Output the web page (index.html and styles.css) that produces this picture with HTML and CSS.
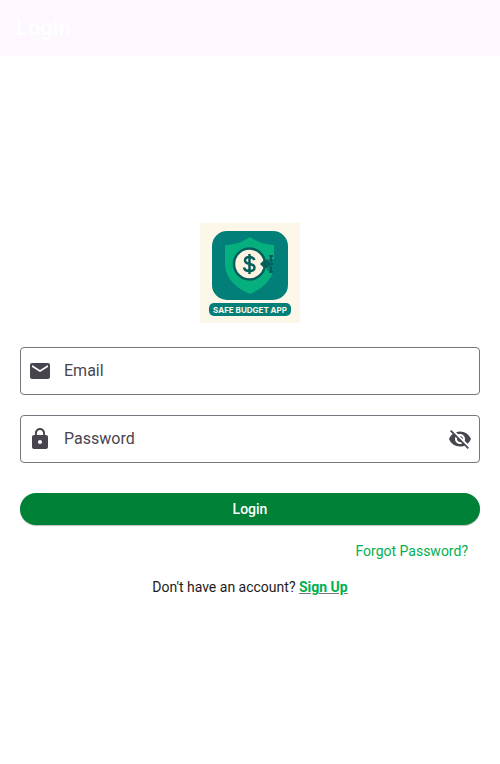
FILE: index.html
```html
<!DOCTYPE html>
<html lang="en">
<head>
<meta charset="utf-8">
<meta name="viewport" content="width=device-width, initial-scale=1">
<title>Login</title>
<link rel="stylesheet" href="styles.css">
</head>
<body>
<header class="app-bar"><h1 class="app-title">Login</h1></header>
<main class="content">
  <svg class="logo" viewBox="0 0 100 100" role="img" aria-label="Safe Budget App">
    <rect width="100" height="100" fill="#fcf7e8"/>
    <rect x="12" y="8" width="76" height="69" rx="15" fill="#027f79"/>
    <path d="M50 14c7 5 15 8 24 8v19c0 14-10 24-24 30-14-6-25-16-25-30V22c9 0 18-3 25-8z" fill="#06b07e"/>
    <path d="M67 36h7v12h-7z" fill="#027f79"/>
    <path d="M71 32v7M71 43v7M69 33h4M69 49h4M66 41h7" fill="none" stroke="#045f5c" stroke-width="2"/>
    <circle cx="49.500" cy="41" r="15.500" fill="#fcf2e1" stroke="#045f5c" stroke-width="2.500"/>
    <path d="M60 41l4-4h3l3 3v2l-3 3h-3z" fill="#045f5c"/>
    <path d="M54.500 37c-1-2-3-3-5-3-3 0-4.500 1.500-4.500 3.500 0 5 9.500 2 9.500 7 0 2.500-2 3.500-5 3.500s-5-1-5.500-3.500M49.500 31v20" fill="none" stroke="#045f5c" stroke-width="2.500"/>
    <rect x="9" y="80" width="82" height="13" rx="5" fill="#027f79"/>
    <text class="logo-text" x="50" y="90" text-anchor="middle">SAFE BUDGET APP</text>
  </svg>
  <form class="form">
    <div class="field">
      <svg class="icon" viewBox="0 0 24 24" aria-hidden="true"><path d="M20 4H4c-1.100 0-1.990.9-1.990 2L2 18c0 1.100.9 2 2 2h16c1.100 0 2-.9 2-2V6c0-1.100-.9-2-2-2zm0 4l-8 5-8-5V6l8 5 8-5v2z"/></svg>
      <label class="label" for="email">Email</label>
      <input class="input" id="email" type="email">
    </div>
    <div class="field">
      <svg class="icon" viewBox="0 0 24 24" aria-hidden="true"><path d="M18 8h-1V6c0-2.760-2.240-5-5-5S7 3.240 7 6v2H6c-1.100 0-2 .9-2 2v10c0 1.100.9 2 2 2h12c1.100 0 2-.9 2-2V10c0-1.100-.9-2-2-2zm-6 9c-1.100 0-2-.9-2-2s.9-2 2-2 2 .9 2 2-.9 2-2 2zm3.100-9H8.900V6c0-1.710 1.390-3.100 3.100-3.100s3.100 1.390 3.100 3.100v2z"/></svg>
      <label class="label" for="password">Password</label>
      <input class="input" id="password" type="password">
      <button class="toggle" type="button" aria-label="Show password">
        <svg class="icon" viewBox="0 0 24 24" aria-hidden="true"><path d="M12 7c2.760 0 5 2.240 5 5 0 .65-.13 1.260-.36 1.830l2.920 2.920c1.510-1.260 2.700-2.890 3.430-4.750-1.730-4.390-6-7.500-11-7.500-1.400 0-2.740.25-3.980.7l2.160 2.160C10.740 7.130 11.350 7 12 7zM2 4.270l2.280 2.280.46.46C3.080 8.300 1.780 10.020 1 12c1.730 4.390 6 7.500 11 7.500 1.550 0 3.030-.3 4.380-.84l.42.42L19.730 22 21 20.730 3.270 3 2 4.270zM7.530 9.800l1.550 1.550c-.05.21-.08.43-.08.65 0 1.660 1.340 3 3 3 .22 0 .44-.03.65-.08l1.550 1.550c-.67.33-1.410.53-2.200.53-2.760 0-5-2.240-5-5 0-.79.2-1.530.53-2.200zm4.310-.78l3.150 3.150.02-.16c0-1.660-1.340-3-3-3l-.17.01z"/></svg>
      </button>
    </div>
    <button class="submit" type="submit">Login</button>
    <a class="forgot" href="#forgot">Forgot Password?</a>
  </form>
  <p class="signup">Don't have an account? <a class="signup-link" href="#signup">Sign Up</a></p>
</main>
</body>
</html>
```
FILE: styles.css
```css
* {
  box-sizing: border-box;
}

body {
  margin: 0;
  min-height: 100vh;
  display: flex;
  flex-direction: column;
  background: #fff;
  color: #1d1b20;
  font: 14px/20px Roboto, sans-serif;
}

.app-bar {
  height: 56px;
  padding: 0 16px;
  display: flex;
  align-items: center;
  background: #fef7ff;
}

.app-title {
  margin: 0;
  color: #fff;
  font-size: 22px;
  line-height: 28px;
  font-weight: 500;
}

.content {
  flex: 1;
  padding: 20px;
  display: flex;
  flex-direction: column;
  align-items: center;
  justify-content: center;
}

.logo {
  width: 100px;
  height: 100px;
  margin-bottom: 24px;
}

.logo-text {
  fill: #fcf7e8;
  font: 700 8px Inter, Roboto, sans-serif;
}

.form {
  width: 100%;
  display: flex;
  flex-direction: column;
}

.field {
  height: 48px;
  margin-bottom: 20px;
  padding: 0 7px;
  display: flex;
  align-items: center;
  border: 1px solid #79747e;
  border-radius: 4px;
}

.field:focus-within {
  border-color: #008138;
}

.icon {
  display: block;
  flex: none;
  width: 24px;
  height: 24px;
  fill: #49454f;
}

.label {
  margin-left: 12px;
  color: #49454f;
  font-size: 16px;
  line-height: 24px;
}

.input {
  flex: 1;
  min-width: 0;
  height: 100%;
  padding: 0 12px;
  border: 0;
  outline: 0;
  background: transparent;
  color: inherit;
  font: inherit;
  font-size: 16px;
}

.toggle {
  padding: 0;
  border: 0;
  background: transparent;
  cursor: pointer;
}

.submit {
  height: 32px;
  margin: 10px 0;
  padding: 0 24px;
  border: 0;
  border-radius: 16px;
  background: #008138;
  box-shadow: 0 1px 1px rgba(0, 0, 0, 0.25);
  color: #fff;
  font: inherit;
  font-weight: 500;
  cursor: pointer;
}

.forgot {
  align-self: flex-end;
  padding: 6px 12px;
  color: #00b050;
  text-decoration: none;
}

.signup {
  margin: 10px 0 0;
}

.signup-link {
  color: #00b050;
  font-weight: 700;
  text-decoration: underline #77757a;
}
```
